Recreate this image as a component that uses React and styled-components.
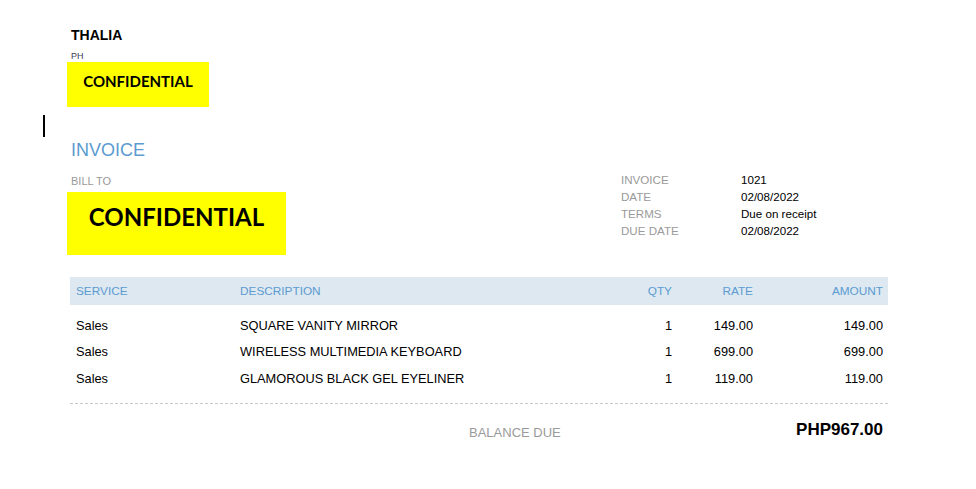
import React from "react";
import styled, { createGlobalStyle } from "styled-components";

const GlobalStyle = createGlobalStyle`
  body {
    margin: 0;
    background: #ffffff;
    font-family: "Liberation Sans", Arial, sans-serif;
    color: #000;
  }
`;

const Page = styled.div`
  width: 818px;
  margin-left: 70px;
  padding-top: 27px;
`;

const CompanyName = styled.div`
  font-size: 14px;
  font-weight: 700;
  line-height: 17px;
  padding-left: 1px;
`;

const Country = styled.div`
  font-size: 9px;
  line-height: 11px;
  margin-top: 7px;
  padding-left: 1px;
  color: #3a4150;
`;

const Redacted = styled.div`
  background: #ffff00;
  display: flex;
  align-items: center;
  justify-content: center;
  margin-left: -3px;
  width: ${(p) => p.$w}px;
  height: ${(p) => p.$h}px;
  font-family: Lato, "Open Sans", sans-serif;
  font-weight: 700;
  font-size: ${(p) => p.$size}px;
  color: #000;
  padding-bottom: ${(p) => p.$lift || 0}px;
  box-sizing: border-box;
`;

const Caret = styled.div`
  width: 2px;
  height: 22px;
  background: #000;
  margin-left: -27px;
  margin-top: 8px;
`;

const Title = styled.div`
  font-size: 18px;
  line-height: 22px;
  color: #5b9bd0;
  margin-top: 2px;
  padding-left: 1px;
`;

const Details = styled.div`
  display: flex;
  justify-content: space-between;
  margin-top: 14px;
`;

const BillTo = styled.div`
  display: flex;
  flex-direction: column;
`;

const Label = styled.div`
  font-size: 11px;
  line-height: 13px;
  color: #9a9a9a;
  padding-left: 1px;
  margin-bottom: 4px;
`;

const Meta = styled.div`
  display: grid;
  grid-template-columns: 120px 147px;
  grid-auto-rows: 17px;
  align-items: center;
  font-size: 11.6px;
  margin-top: -4px;
`;

const MetaKey = styled.div`
  color: #9a9a9a;
`;

const MetaValue = styled.div`
  color: #000;
`;

const Table = styled.div`
  margin-top: 22px;
  display: grid;
  grid-template-columns: 170px 356px 81px 81px 130px;
`;

const HeadCell = styled.div`
  background: #dde8f1;
  height: 28px;
  display: flex;
  align-items: center;
  justify-content: ${(p) => (p.$right ? "flex-end" : "flex-start")};
  padding: ${(p) => (p.$right ? "0 5px 0 0" : p.$first ? "0 0 0 6px" : "0")};
  font-size: 11.8px;
  color: #5b9bd0;
  margin-bottom: 7px;
`;

const Cell = styled.div`
  height: 26.5px;
  display: flex;
  align-items: center;
  justify-content: ${(p) => (p.$right ? "flex-end" : "flex-start")};
  padding: ${(p) => (p.$right ? "0 5px 0 0" : p.$first ? "0 0 0 6px" : "0")};
  font-size: 12.8px;
  color: #000;
`;

const Divider = styled.div`
  margin-top: 11px;
  border-top: 1px dashed #c8c8c8;
`;

const Balance = styled.div`
  display: flex;
  align-items: flex-start;
  justify-content: space-between;
  padding: 16px 5px 0 399px;
`;

const BalanceLabel = styled.div`
  font-size: 13px;
  color: #9a9a9a;
  margin-top: 5px;
`;

const BalanceAmount = styled.div`
  font-size: 17px;
  font-weight: 700;
`;

const items = [
  { service: "Sales", desc: "SQUARE VANITY MIRROR", qty: 1, rate: "149.00", amount: "149.00" },
  { service: "Sales", desc: "WIRELESS MULTIMEDIA KEYBOARD", qty: 1, rate: "699.00", amount: "699.00" },
  { service: "Sales", desc: "GLAMOROUS BLACK GEL EYELINER", qty: 1, rate: "119.00", amount: "119.00" },
];

const meta = [
  ["INVOICE", "1021"],
  ["DATE", "02/08/2022"],
  ["TERMS", "Due on receipt"],
  ["DUE DATE", "02/08/2022"],
];

const App = () => {
  return (
    <>
      <GlobalStyle />
      <Page>
        <CompanyName>THALIA</CompanyName>
        <Country>PH</Country>
        <Redacted $w={142} $h={45} $size={15} $lift={8}>CONFIDENTIAL</Redacted>
        <Caret />
        <Title>INVOICE</Title>
        <Details>
          <BillTo>
            <Label>BILL TO</Label>
            <Redacted $w={219} $h={63} $size={24} $lift={14}>CONFIDENTIAL</Redacted>
          </BillTo>
          <Meta>
            {meta.map(([k, v]) => (
              <React.Fragment key={k}>
                <MetaKey>{k}</MetaKey>
                <MetaValue>{v}</MetaValue>
              </React.Fragment>
            ))}
          </Meta>
        </Details>
        <Table>
          <HeadCell $first>SERVICE</HeadCell>
          <HeadCell>DESCRIPTION</HeadCell>
          <HeadCell $right>QTY</HeadCell>
          <HeadCell $right>RATE</HeadCell>
          <HeadCell $right>AMOUNT</HeadCell>
          {items.map((it) => (
            <React.Fragment key={it.desc}>
              <Cell $first>{it.service}</Cell>
              <Cell>{it.desc}</Cell>
              <Cell $right>{it.qty}</Cell>
              <Cell $right>{it.rate}</Cell>
              <Cell $right>{it.amount}</Cell>
            </React.Fragment>
          ))}
        </Table>
        <Divider />
        <Balance>
          <BalanceLabel>BALANCE DUE</BalanceLabel>
          <BalanceAmount>PHP967.00</BalanceAmount>
        </Balance>
      </Page>
    </>
  );
};

export default App;
